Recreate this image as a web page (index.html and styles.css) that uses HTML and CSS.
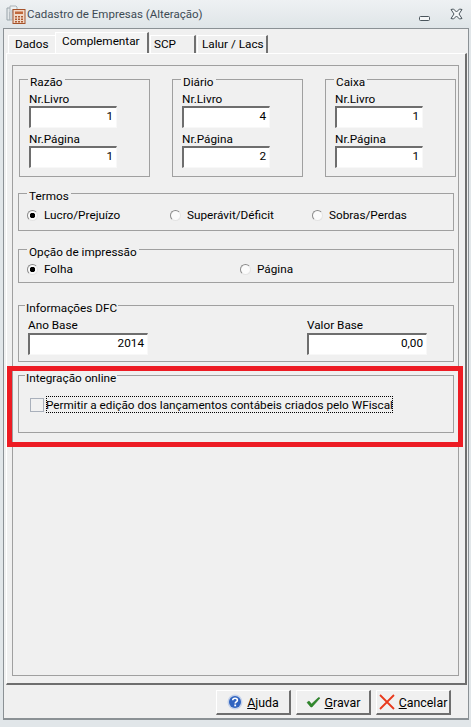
FILE: index.html
```html
<!DOCTYPE html>
<html lang="pt-BR">
<head>
    <meta charset="UTF-8">
    <title>Cadastro de Empresas (Alteração)</title>
    <link rel="stylesheet" href="styles.css">
</head>
<body>
    <div class="titlebar">
        <svg class="app-icon" width="20" height="20" viewBox="0 0 20 20">
            <path d="M1 4h6l1 1v3H4v8H1z" fill="#e4e8ea" stroke="#9aa5ab"/>
            <path d="M4 2h6l1 1v3H6v10H4z" fill="#eef1f2" stroke="#aab3b8"/>
            <rect x="7" y="5.5" width="12" height="14" fill="#f0d9c8" stroke="#a5532c"/>
            <rect x="9" y="7.5" width="8" height="2.5" fill="#c0673a"/>
            <path d="M9 12h2v1.500H9zM12 12h2v1.500h-2zM15 12h2v1.500h-2zM9 14.500h2V16H9zM12 14.500h2V16h-2zM15 14.500h2V16h-2zM9 17h2v1.500H9zM12 17h2v1.500h-2zM15 17h2v1.500h-2z" fill="#b05a30"/>
        </svg>
        <span class="title-text">Cadastro de Empresas (Alteração)</span>
        <svg class="win-btn min-btn" width="11" height="6" viewBox="0 0 11 6">
            <rect x="0.500" y="0.500" width="10" height="4" rx="1" fill="#f4f6f7" stroke="#4a555c"/>
        </svg>
        <svg class="win-btn" width="13" height="12" viewBox="0 0 13 12">
            <path d="M1 1.500 3.500 1 6.500 4 9.500 1 12 1.500 9 6 12 10.500 9.500 11 6.500 8 3.500 11 1 10.500 4 6z" fill="#f4f6f7" stroke="#4a555c" stroke-linejoin="round"/>
        </svg>
    </div>

    <div class="window">
        <div class="tabs">
            <div class="tab tab-dados">Dados</div>
            <div class="tab tab-active">Complementar</div>
            <div class="tab tab-scp">SCP</div>
            <div class="tab tab-lalur">Lalur / Lacs</div>
        </div>

        <div class="page">
            <div class="panel">
                <div class="book-row">
                    <div class="group book">
                        <div class="legend">Razão</div>
                        <label class="field-label">Nr.Livro</label>
                        <div class="field">1</div>
                        <label class="field-label">Nr.Página</label>
                        <div class="field">1</div>
                    </div>
                    <div class="group book">
                        <div class="legend">Diário</div>
                        <label class="field-label">Nr.Livro</label>
                        <div class="field">4</div>
                        <label class="field-label">Nr.Página</label>
                        <div class="field">2</div>
                    </div>
                    <div class="group book">
                        <div class="legend">Caixa</div>
                        <label class="field-label">Nr.Livro</label>
                        <div class="field">1</div>
                        <label class="field-label">Nr.Página</label>
                        <div class="field">1</div>
                    </div>
                </div>

                <div class="group termos">
                    <div class="legend">Termos</div>
                    <div class="radio-row">
                        <span class="radio-item radio-lucro"><span class="radio checked"></span>Lucro/Prejuízo</span>
                        <span class="radio-item radio-superavit"><span class="radio"></span>Superávit/Déficit</span>
                        <span class="radio-item"><span class="radio"></span>Sobras/Perdas</span>
                    </div>
                </div>

                <div class="group impressao">
                    <div class="legend">Opção de impressão</div>
                    <div class="radio-row">
                        <span class="radio-item radio-folha"><span class="radio checked"></span>Folha</span>
                        <span class="radio-item"><span class="radio"></span>Página</span>
                    </div>
                </div>

                <div class="group dfc">
                    <div class="legend legend-tight">Informações DFC</div>
                    <div class="dfc-row">
                        <div class="dfc-col">
                            <label class="field-label">Ano Base</label>
                            <div class="field field-wide">2014</div>
                        </div>
                        <div class="dfc-col">
                            <label class="field-label">Valor Base</label>
                            <div class="field field-wide">0,00</div>
                        </div>
                    </div>
                </div>

                <div class="group online">
                    <div class="legend legend-tight">Integração online</div>
                    <div class="check-row">
                        <span class="checkbox"></span>
                        <span class="check-label">Permitir a edição dos lançamentos contábeis criados pelo WFiscal</span>
                    </div>
                </div>
            </div>
        </div>

        <div class="actions">
            <button class="btn">
                <svg width="16" height="16" viewBox="0 0 16 16">
                    <circle cx="8" cy="8" r="7.500" fill="#c5d2ea"/>
                    <circle cx="8" cy="8" r="6" fill="#2f63c0"/>
                    <path d="M5.700 6.300C5.800 4.800 6.800 4.200 8 4.200c1.400 0 2.400.8 2.400 2 0 1.800-2.200 1.700-2.200 3.300" fill="none" stroke="#fff" stroke-width="1.600"/>
                    <rect x="7.300" y="10.500" width="1.800" height="1.800" fill="#fff"/>
                </svg>
                <span><u>A</u>juda</span>
            </button>
            <button class="btn">
                <svg width="15" height="12" viewBox="0 0 15 12">
                    <path d="M1 6.500 3 5l2.500 3L12.500 1.500 14 2 6 11H4.800z" fill="#2f8a2a" stroke="#1f6a1e" stroke-width="0.500"/>
                </svg>
                <span><u>G</u>ravar</span>
            </button>
            <button class="btn btn-cancel">
                <svg width="16" height="16" viewBox="0 0 16 16">
                    <path d="M1 1 15 15M15 1 1 15" stroke="#e8391c" stroke-width="1.800" fill="none"/>
                </svg>
                <span><u>C</u>ancelar</span>
            </button>
        </div>
    </div>

    <div class="highlight"></div>
</body>
</html>
```

FILE: styles.css
```css
* {
    margin: 0;
    padding: 0;
    box-sizing: border-box;
}

body {
    position: relative;
    width: 471px;
    height: 727px;
    overflow: hidden;
    background-color: #e1e6e9;
    font-family: Roboto, sans-serif;
    font-size: 11.750px;
    color: #000;
    white-space: nowrap;
}

.titlebar {
    display: flex;
    align-items: center;
    height: 28px;
    padding: 0 8px 0 6px;
    background: linear-gradient(#eef1f3, #dfe5e8);
}

.app-icon {
    margin-right: 1px;
}

.title-text {
    flex: 1;
    font-size: 11.500px;
    color: #3d4a54;
}

.win-btn {
    display: block;
}

.min-btn {
    margin-right: 20px;
    margin-top: 10px;
}

.window {
    width: 466px;
    height: 692px;
    padding: 3px 1px 0 2px;
    margin-left: 3px;
    background-color: #f0f0f0;
    border: 1px solid #8b9195;
    border-width: 1px 1px 2px 1px;
}

.tabs {
    display: flex;
    align-items: flex-end;
    height: 21px;
    margin-left: 2px;
}

.tab {
    height: 18px;
    padding-left: 6px;
    line-height: 17px;
    border-top: 1px solid #fff;
    border-left: 1px solid #fff;
    border-right: 2px solid #707070;
}

.tab-dados {
    width: 47px;
    border-right: none;
}

.tab-active {
    width: 94px;
    height: 21px;
    background-color: #f4f4f4;
    line-height: 16px;
}

.tab-scp {
    width: 46px;
    margin-left: 1px;
    padding-left: 3px;
}

.tab-lalur {
    width: 71px;
    margin-left: 1px;
    padding-left: 4px;
}

.page {
    width: 461px;
    height: 632px;
    padding: 11px 0 0 5px;
    background-color: #f0f0f0;
    border-top: 1px solid #fff;
    border-left: 1px solid #fff;
    border-right: 2px solid #6e6e6e;
    border-bottom: 2px solid #6e6e6e;
}

.panel {
    width: 447px;
    height: 611px;
    padding: 13px 0 0 6px;
    border: 1px solid #a0a0a0;
}

.group {
    border: 1px solid #a0a0a0;
}

.legend {
    display: table;
    height: 18px;
    margin: -7px 0 -4px 8px;
    padding: 0 2px;
    line-height: 18px;
    background: linear-gradient(#f0f0f0, #f0f0f0) no-repeat;
}

.legend-tight {
    margin-left: 6px;
    padding: 0 1px;
}

.book-row {
    display: flex;
    gap: 22px;
}

.book {
    width: 131px;
    height: 98px;
    padding-left: 9px;
}

.book .legend {
    margin-bottom: -3px;
    margin-left: -1px;
}

.field-label {
    display: block;
    height: 18px;
    line-height: 22px;
}

.field {
    width: 88px;
    height: 22px;
    padding-right: 3px;
    line-height: 16px;
    text-align: right;
    background-color: #fff;
    border-top: 2px solid #6e6e6e;
    border-left: 2px solid #6e6e6e;
    border-right: 1px solid #f8f8f8;
    border-bottom: 1px solid #f8f8f8;
}

.termos {
    width: 436px;
    height: 38px;
    margin-top: 16px;
    margin-left: -1px;
}

.impressao {
    width: 436px;
    height: 34px;
    margin-top: 18px;
    margin-left: -1px;
}

.radio-row {
    display: flex;
    padding-left: 8px;
}

.radio-item {
    display: flex;
    align-items: center;
    height: 16px;
    margin-top: 6px;
}

.impressao .radio-item {
    margin-top: 4px;
}

.radio-lucro {
    width: 143px;
}

.radio-superavit {
    width: 142px;
}

.radio-folha {
    width: 213px;
}

.radio {
    width: 11px;
    height: 11px;
    margin-right: 6px;
    background-color: #fbfbfb;
    border: 1px solid #8a8a8a;
    border-right-color: #e4e4e4;
    border-bottom-color: #e4e4e4;
    border-radius: 50%;
}

.radio.checked {
    background: radial-gradient(circle, #000 0 2.500px, #fbfbfb 3px);
}

.dfc {
    width: 436px;
    height: 57px;
    margin-top: 22px;
    margin-left: -1px;
}

.dfc-row {
    display: flex;
    justify-content: space-between;
    padding: 0 26px 0 9px;
}

.dfc .field-label {
    height: 20px;
    line-height: 24px;
}

.dfc .field {
    line-height: 17px;
}

.field-wide {
    width: 120px;
}

.online {
    width: 436px;
    height: 58px;
    margin-top: 13px;
    margin-left: -1px;
}

.check-row {
    display: flex;
    align-items: center;
    margin: 13px 0 0 11px;
}

.checkbox {
    width: 14px;
    height: 14px;
    margin-right: 2px;
    background-color: #f1f1f1;
    border: 1px solid #a9b0bb;
}

.check-label {
    height: 17px;
    line-height: 18px;
    outline: 1px dotted #000;
    outline-offset: -1px;
}

.actions {
    display: flex;
    justify-content: flex-end;
    gap: 5px;
    padding: 5px 16px 0 0;
}

.btn {
    display: flex;
    align-items: center;
    justify-content: center;
    gap: 4px;
    width: 75px;
    height: 25px;
    font-family: inherit;
    font-size: 12.400px;
    color: #000;
    background-color: #f0f0f0;
    border: 1px solid #fff;
    border-right: 2px solid #6e6e6e;
    border-bottom: 2px solid #6e6e6e;
}

.highlight {
    position: absolute;
    left: 7px;
    top: 366px;
    width: 456px;
    height: 81px;
    border: 5px solid #ed1c24;
}
```
